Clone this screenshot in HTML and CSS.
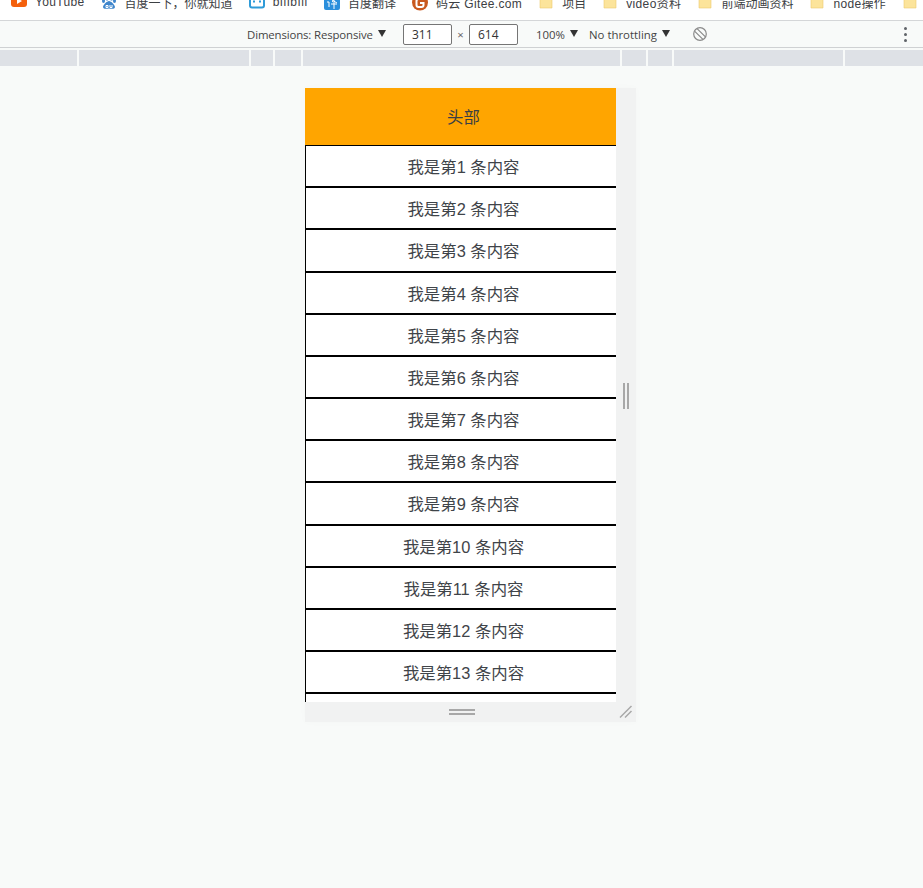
FILE: index.html
```html
<!DOCTYPE html>
<html lang="zh-CN">
<head>
<meta charset="utf-8">
<title>Device toolbar</title>
<link rel="stylesheet" href="styles.css">
</head>
<body>
<nav class="bookmarks">
  <a class="bm"><svg class="ico" viewBox="0 0 16 16"><rect y="-2" width="16" height="14" rx="3" fill="#f4600c"/><path d="M6 3v6l5-3z" fill="#fff"/></svg><span class="latin">YouTube</span></a>
  <a class="bm"><svg class="ico" viewBox="0 0 16 16"><g fill="#3f86cc"><ellipse cx="2.500" cy="6" rx="1.500" ry="2"/><ellipse cx="6" cy="3.500" rx="1.500" ry="2"/><ellipse cx="10.500" cy="3.500" rx="1.500" ry="2"/><ellipse cx="13.500" cy="6" rx="1.500" ry="2"/><path d="M8 6c2 0 6 4 6 6s-3 2-6 1.500c-3 .5-6 .5-6-1.500s4-6 6-6z"/></g><path d="M5 10.500h2v2H5zM9 10v2.500h2V10" fill="none" stroke="#fff"/></svg><span>百度一下，你就知道</span></a>
  <a class="bm"><svg class="ico" viewBox="0 0 16 16"><rect x="1" y="1" width="14" height="11.500" rx="2" fill="none" stroke="#2f9bd8" stroke-width="2"/><path d="M5 5.500v2M11 5.500v2" stroke="#2f9bd8" stroke-width="2"/></svg><span class="latin bili">bilibili</span></a>
  <a class="bm"><svg class="ico" viewBox="0 0 16 16"><rect width="16" height="15" rx="2" fill="#2b8fdc"/><path d="M3 3l2 2M3 7h2v5M7 3h6l-5 4M8 5l5 3M7 9h6M10 7v7" stroke="#fff" fill="none"/></svg><span>百度翻译</span></a>
  <a class="bm"><svg class="ico" viewBox="0 0 16 16"><circle cx="8" cy="7.500" r="8" fill="#c9591f"/><path d="M12 4H6.500A2 2 0 0 0 4.500 6v4a2 2 0 0 0 2 2H9.500a2 2 0 0 0 2-2V8H8" fill="none" stroke="#fff" stroke-width="2"/></svg><span class="latin">码云 Gitee.com</span></a>
  <a class="bm"><svg class="ico" viewBox="0 0 16 16"><path class="folder" d="M2 1h4l2 2h6v10H2z"/></svg><span>项目</span></a>
  <a class="bm"><svg class="ico" viewBox="0 0 16 16"><path class="folder" d="M2 1h4l2 2h6v10H2z"/></svg><span class="latin">video资料</span></a>
  <a class="bm"><svg class="ico" viewBox="0 0 16 16"><path class="folder" d="M2 1h4l2 2h6v10H2z"/></svg><span>前端动画资料</span></a>
  <a class="bm"><svg class="ico" viewBox="0 0 16 16"><path class="folder" d="M2 1h4l2 2h6v10H2z"/></svg><span class="latin">node操作</span></a>
  <a class="bm"><svg class="ico" viewBox="0 0 16 16"><path class="folder" d="M2 1h4l2 2h6v10H2z"/></svg></a>
</nav>

<div class="toolbar">
  <span class="tool dims">Dimensions: Responsive<i class="arrow"></i></span>
  <input class="num" value="311" readonly>
  <span class="times">×</span>
  <input class="num" value="614" readonly>
  <span class="tool zoom">100%<i class="arrow"></i></span>
  <span class="tool throttle">No throttling<i class="arrow"></i></span>
  <svg class="rotate" viewBox="0 0 16 16"><g fill="none" stroke="#8a8a8a" stroke-width="1.200"><circle cx="8" cy="8" r="6.300"/><path d="M2.800 5.300l7.900 7.900M5.300 2.800l7.900 7.900"/></g></svg>
  <span class="dots"><i></i><i></i><i></i></span>
</div>

<div class="media">
  <i></i><i></i><i></i><i></i><i></i><i></i><i></i><i></i><i></i>
</div>

<main class="stage">
  <div class="frame">
    <div class="viewport">
      <header class="head">头部</header>
      <ul class="list">
        <li>我是第1 条内容</li>
        <li>我是第2 条内容</li>
        <li>我是第3 条内容</li>
        <li>我是第4 条内容</li>
        <li>我是第5 条内容</li>
        <li>我是第6 条内容</li>
        <li>我是第7 条内容</li>
        <li>我是第8 条内容</li>
        <li>我是第9 条内容</li>
        <li>我是第10 条内容</li>
        <li>我是第11 条内容</li>
        <li>我是第12 条内容</li>
        <li>我是第13 条内容</li>
        <li>我是第14 条内容</li>
      </ul>
    </div>
    <div class="gutter-r"><span class="grip-v"></span></div>
    <div class="gutter-b"><span class="grip-h"></span></div>
    <div class="corner"><svg class="resize" viewBox="0 0 14 14"><path d="M1 12.500L12.500 1M6 12.500L12.500 6" stroke="#a8a8a8" stroke-width="1.500" fill="none"/></svg></div>
  </div>
</main>
</body>
</html>
```
FILE: styles.css
```css
* { box-sizing: border-box; }
html, body { margin: 0; height: 100%; }
body {
  width: 923px;
  height: 888px;
  overflow: hidden;
  background: #f8faf9;
  font-family: "Liberation Sans", "Noto Sans CJK SC", sans-serif;
  color: #333;
}

.bookmarks {
  height: 21px;
  padding: 0 0 10px 11px;
  display: flex;
  align-items: flex-end;
  gap: 16px;
  background: #fff;
  border-bottom: 1px solid #d4d6d8;
  overflow: hidden;
  white-space: nowrap;
  font-size: 12px;
  color: #3c4043;
}
.bm { display: flex; align-items: center; gap: 8px; height: 16px; flex: none; }
.ico { width: 16px; height: 16px; flex: none; margin-top: 2px; }
.latin { letter-spacing: .35px; }
.bili { letter-spacing: .75px; }
.folder { fill: #fce49b; stroke: #eccb6e; stroke-width: .6; }

.toolbar {
  height: 27px;
  display: flex;
  align-items: center;
  padding-left: 247px;
  background: #f8faf9;
  border-bottom: 1px solid #cfd1d3;
  font-family: "Open Sans", "Noto Sans CJK SC", sans-serif;
  font-size: 11.400px;
  color: #444;
  white-space: nowrap;
}
.tool { display: flex; align-items: center; }
.arrow {
  width: 0; height: 0;
  margin-left: 5px;
  margin-top: -2px;
  border-left: 4.500px solid transparent;
  border-right: 4.500px solid transparent;
  border-top: 7px solid #333;
}
.dims { width: 156px; letter-spacing: -.13px; }
.num {
  width: 49px;
  height: 21px;
  padding: 0 0 0 8px;
  border: 1px solid #757575;
  border-radius: 2px;
  background: #fff;
  font-size: 12px;
  font-family: inherit;
  color: #333;
}
.times { width: 17px; text-align: center; color: #666; }
.zoom { margin-left: 18px; width: 53px; }
.throttle { width: 104px; }
.rotate { width: 16px; height: 16px; flex: none; margin-left: -1px; }
.dots { margin-left: 196px; display: flex; flex-direction: column; gap: 3px; }
.dots i { width: 3px; height: 3px; border-radius: 50%; background: #5f6368; }

.media {
  margin-top: 2px;
  height: 16px;
  display: grid;
  grid-template-columns: 77px 170.500px 22.500px 26.500px 317.500px 24.500px 24.500px 169.500px 1fr;
  gap: 1.500px;
}
.media i { background: #dee1e6; }

.stage { padding: 22px 0 0 305px; }
.frame {
  width: 331px;
  height: 634px;
  display: grid;
  grid-template-columns: 311px 20px;
  grid-template-rows: 614px 20px;
  box-shadow: 0 0 8px rgba(0, 0, 0, .02);
}
.viewport { overflow: hidden; background: #fff; }
.head {
  height: 57px;
  background: #ffa500;
  display: flex;
  align-items: center;
  justify-content: center;
  font-size: 16.400px;
  padding-bottom: 2px;
  padding-left: 6px;
  color: #3a3f45;
}
.list { margin: 0; padding: 0; list-style: none; }
.list li {
  height: 42.180px;
  line-height: 42.500px;
  border: 1px solid #000;
  border-right: 0;
  text-align: center;
  font-size: 16.400px;
  color: #3f4449;
  padding-left: 5px;
}
.gutter-r, .gutter-b, .corner { background: #f1f2f2; display: flex; }
.gutter-r { align-items: center; justify-content: center; }
.grip-v {
  width: 6px;
  height: 26px;
  margin-top: 2px;
  border-left: 2px solid #a8a8a8;
  border-right: 2px solid #a8a8a8;
}
.gutter-b { align-items: center; justify-content: center; padding-left: 2px; }
.grip-h {
  width: 26px;
  height: 6px;
  margin-bottom: 1px;
  border-top: 2px solid #a8a8a8;
  border-bottom: 2px solid #a8a8a8;
}
.corner { align-items: flex-end; justify-content: flex-end; padding: 0 3px 3px 0; }
.resize { width: 14px; height: 14px; }
```
